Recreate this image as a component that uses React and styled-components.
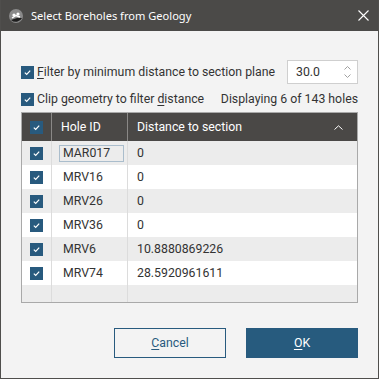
import React from "react";
import styled, { createGlobalStyle } from "styled-components";

const Global = createGlobalStyle`
  html, body { margin: 0; padding: 0; background: #f3f3f3; }
  body { font-family: Roboto, "Liberation Sans", sans-serif; }
`;

const Window = styled.div`
  width: 379px;
  height: 379px;
  box-sizing: border-box;
  border: 1px solid #4f4e4c;
  border-top: none;
  background: #f3f3f3;
  display: flex;
  flex-direction: column;
`;

const TitleBar = styled.div`
  height: 31px;
  flex: none;
  background: #4b4a48;
  display: flex;
  align-items: center;
  padding: 0 9px 0 8px;
  gap: 8px;
  color: #fff;
  font-family: "Noto Sans", "Open Sans", sans-serif;
  font-size: 11.1px;
`;

const TitleText = styled.div`
  flex: 1;
  white-space: nowrap;
`;

const Content = styled.div`
  flex: 1;
  display: flex;
  flex-direction: column;
  padding: 29px 20px 20px 20px;
  color: #333;
  font-size: 12.3px;
  white-space: nowrap;
`;

const Row = styled.div`
  display: flex;
  align-items: center;
  justify-content: space-between;
  height: ${(p) => p.$h}px;
  margin-bottom: ${(p) => p.$mb || 0}px;
`;

const CheckLabel = styled.label`
  display: flex;
  align-items: center;
  gap: 3px;
  color: #333;
  flex: none;
`;

const Box = styled.span`
  width: 13px;
  height: 13px;
  background: #285a7e;
  display: inline-flex;
  align-items: center;
  justify-content: center;
  flex: none;
`;

const U = styled.span`
  text-decoration: underline;
  text-underline-offset: 2px;
`;

const Check = () => (
  <Box>
    <svg width="9" height="9" viewBox="0 0 9 9">
      <path d="M1.8 4.6 L3.7 6.4 L7.2 2.6" fill="none" stroke="#fff" strokeWidth="1.2" />
    </svg>
  </Box>
);

const Spin = styled.div`
  width: 71px;
  height: 24px;
  flex: none;
  box-sizing: border-box;
  border: 1px solid #cfcfcf;
  background: #fff;
  display: flex;
  align-items: center;
  padding: 0 6px 0 8px;
  justify-content: space-between;
`;

const Arrows = styled.div`
  display: flex;
  flex-direction: column;
  gap: 4px;
`;

const Table = styled.div`
  border: 1px solid #a9a9a9;
  height: 191px;
  box-sizing: border-box;
  background: #ececec;
  overflow: hidden;
  display: flex;
  flex-direction: column;
`;

const Grid = styled.div`
  display: grid;
  grid-template-columns: 30px 76px 1fr;
  height: ${(p) => p.$h}px;
  flex: none;
  background: ${(p) => p.$bg};
  color: ${(p) => p.$color || "#333"};
`;

const Cell = styled.div`
  display: flex;
  align-items: center;
  padding-left: ${(p) => p.$pl || 0}px;
  justify-content: ${(p) => (p.$center ? "center" : "flex-start")};
  border-right: ${(p) => (p.$last ? "none" : `1px solid ${p.$line}`)};
`;

const HeadCell = styled(Cell)`
  justify-content: space-between;
  padding-right: 14px;
`;

const Focus = styled.span`
  border: 1px solid #aabdcc;
  padding: 0 13px 0 3px;
  height: 15px;
  display: inline-flex;
  align-items: center;
  margin-left: -4px;
`;

const Filler = styled(Grid)`
  flex: 1;
  height: auto;
`;

const Footer = styled.div`
  display: flex;
  justify-content: flex-end;
  gap: 20px;
  margin-top: auto;
`;

const Button = styled.button`
  width: 112px;
  height: 30px;
  box-sizing: border-box;
  font-family: Roboto, "Liberation Sans", sans-serif;
  font-size: 12.3px;
  border: 1px solid #285a7e;
  background: ${(p) => (p.$primary ? "#275b7e" : "#f3f3f3")};
  color: ${(p) => (p.$primary ? "#fff" : "#285a7e")};
  padding: 0;
`;

const rows = [
  ["MAR017", "0"],
  ["MRV16", "0"],
  ["MRV26", "0"],
  ["MRV36", "0"],
  ["MRV6", "10.8880869226"],
  ["MRV74", "28.5920961611"],
];

export default function App() {
  return (
    <>
      <Global />
      <Window>
        <TitleBar>
          <svg width="14" height="14" viewBox="0 0 14 14">
            <circle cx="7" cy="7" r="7" fill="#8a8a8a" />
            <path d="M2 11 A7 7 0 0 0 13 9 L8 9 Z" fill="#1e1e1e" />
            <circle cx="5" cy="6" r="1.6" fill="#fff" />
            <circle cx="9" cy="5" r="1.6" fill="#fff" />
            <path d="M3 9 L7 6.5 L11 8" stroke="#fff" strokeWidth="1.4" fill="none" />
          </svg>
          <TitleText>Select Boreholes from Geology</TitleText>
          <svg width="11" height="11" viewBox="0 0 11 11">
            <path d="M0.5 0.5 L10.5 10.5 M10.5 0.5 L0.5 10.5" stroke="#fff" strokeWidth="1.1" />
          </svg>
        </TitleBar>
        <Content>
          <Row $h={24} $mb={5}>
            <CheckLabel>
              <Check />
              <span>
                <U>F</U>ilter by minimum distance to section plane
              </span>
            </CheckLabel>
            <Spin>
              <span>30.0</span>
              <Arrows>
                <svg width="7" height="4" viewBox="0 0 7 4">
                  <path d="M0.5 3.5 L3.5 0.5 L6.5 3.5" stroke="#a0a0a0" fill="none" />
                </svg>
                <svg width="7" height="4" viewBox="0 0 7 4">
                  <path d="M0.5 0.5 L3.5 3.5 L6.5 0.5" stroke="#a0a0a0" fill="none" />
                </svg>
              </Arrows>
            </Spin>
          </Row>
          <Row $h={20} $mb={3}>
            <CheckLabel>
              <Check />
              <span>
                Clip geometry to filter <U>d</U>istance
              </span>
            </CheckLabel>
            <span>Displaying 6 of 143 holes</span>
          </Row>
          <Table>
            <Grid $h={28} $bg="#4a4846" $color="#fff">
              <Cell $center $line="#8a8886">
                <Check />
              </Cell>
              <Cell $pl={9} $line="#8a8886">Hole ID</Cell>
              <HeadCell $pl={9} $last>
                <span>Distance to section</span>
                <svg width="9" height="5" viewBox="0 0 9 5">
                  <path d="M0.5 4.5 L4.5 0.8 L8.5 4.5" stroke="#fff" fill="none" strokeWidth="1" />
                </svg>
              </HeadCell>
            </Grid>
            {rows.map(([id, d], i) => (
              <Grid key={id} $h={24} $bg={i % 2 === 0 ? "#ececec" : "#ffffff"}>
                <Cell $center $line="#dcdcdc">
                  <Check />
                </Cell>
                <Cell $pl={11} $line="#dcdcdc">
                  {i === 0 ? <Focus>{id}</Focus> : id}
                </Cell>
                <Cell $pl={9} $last>
                  {d}
                </Cell>
              </Grid>
            ))}
            <Filler $bg="#ececec">
              <Cell $line="#dcdcdc" />
              <Cell $line="#dcdcdc" />
              <Cell $last />
            </Filler>
          </Table>
          <Footer>
            <Button>
              <U>C</U>ancel
            </Button>
            <Button $primary>
              <U>O</U>K
            </Button>
          </Footer>
        </Content>
      </Window>
    </>
  );
}
